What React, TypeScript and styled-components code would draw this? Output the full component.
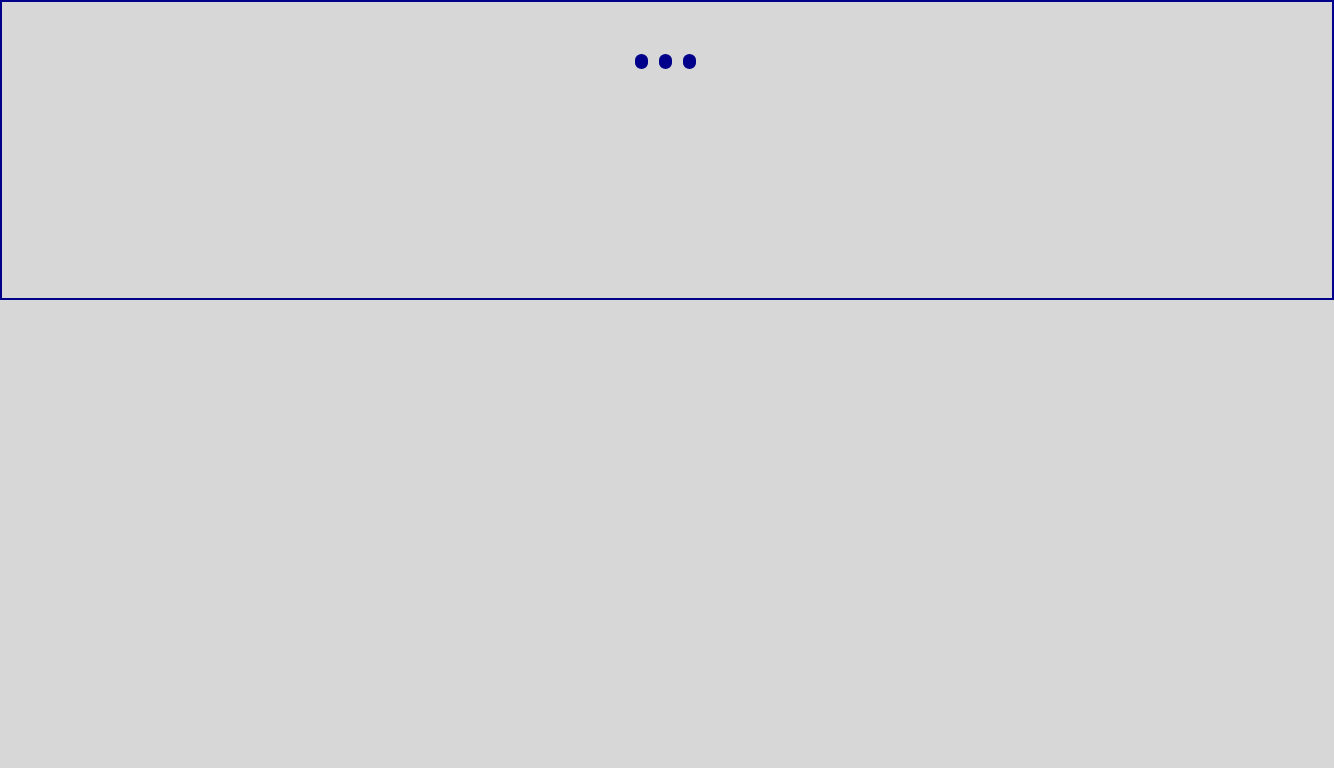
import React from "react";
import styled, { createGlobalStyle } from "styled-components";

const GlobalStyle = createGlobalStyle`
  html, body {
    margin: 0;
    padding: 0;
    background-color: #d7d7d7;
    font-family: "Liberation Sans", Arial, sans-serif;
  }
`;

const Panel = styled.div`
  box-sizing: border-box;
  width: 100%;
  height: 300px;
  border: 2px solid #00008b;
  display: flex;
  justify-content: center;
  align-items: flex-start;
  padding-top: 52px;
  padding-right: 3px;
`;

const Loader = styled.div`
  display: flex;
  gap: 11px;
`;

const Dot = styled.span`
  display: block;
  width: 13px;
  height: 15px;
  border-radius: 6.5px / 6px;
  background-color: #00008b;
`;

export default function App() {
  return (
    <>
      <GlobalStyle />
      <Panel>
        <Loader>
          <Dot />
          <Dot />
          <Dot />
        </Loader>
      </Panel>
    </>
  );
}
